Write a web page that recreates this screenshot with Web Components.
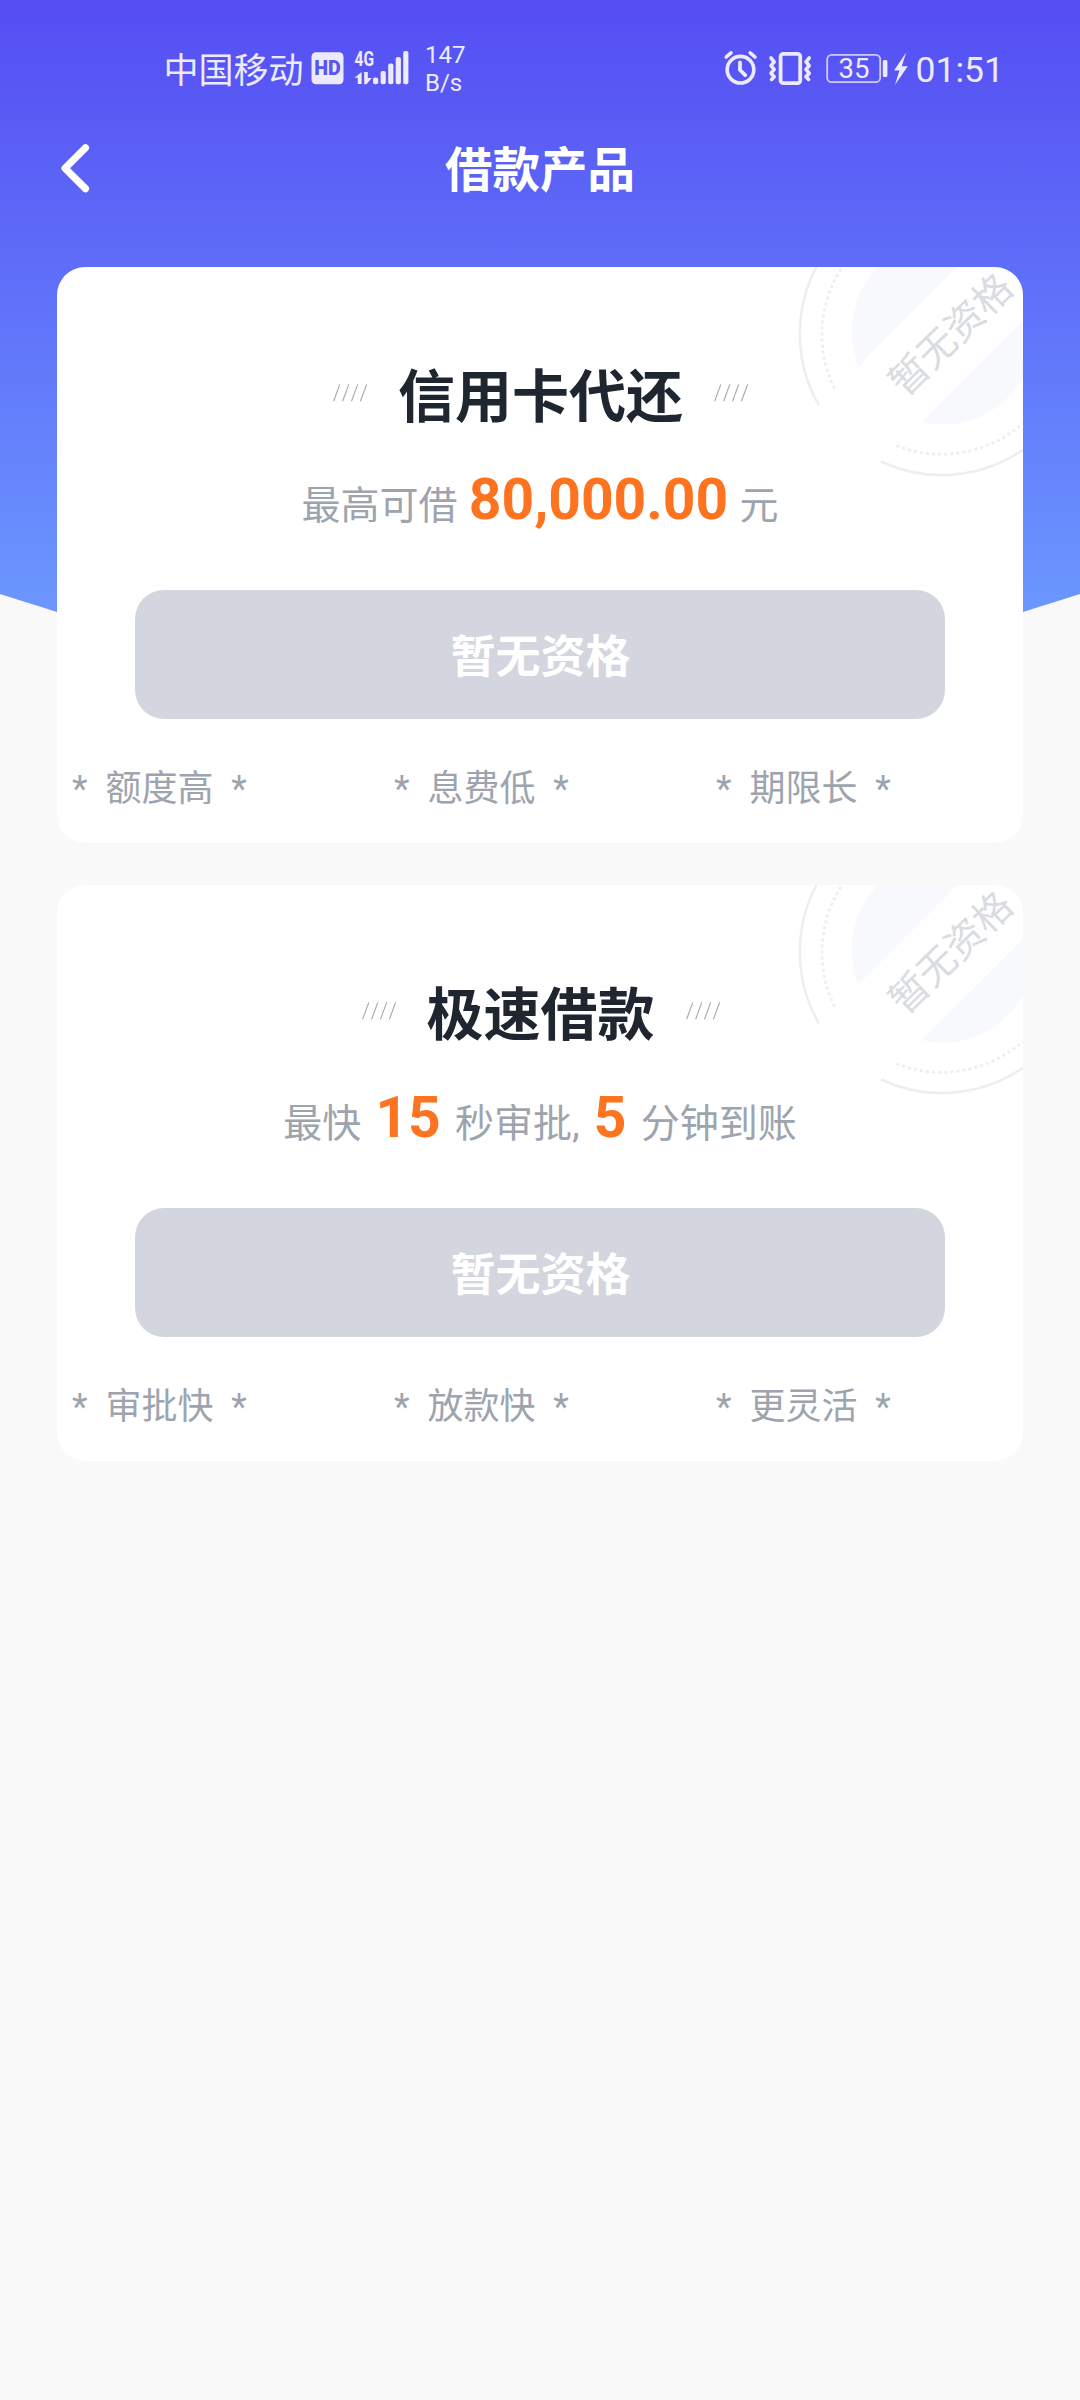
<!DOCTYPE html>
<html lang="zh-CN">
<head>
<meta charset="utf-8">
<title>借款产品</title>
<style>
html,body{margin:0;padding:0;background:#f9f9f9}
body{width:1080px;font-family:Roboto,"Noto Sans CJK SC",sans-serif}
.amount{word-spacing:1.5px}
</style>
</head>
<body>
<loan-page>
  <status-bar slot="top"></status-bar>
  <nav-header slot="top">借款产品</nav-header>
  <loan-card>
    <span slot="title">信用卡代还</span>
    <sub-line slot="sub" class="amount">最高可借 <b>80,000.00</b> 元</sub-line>
    <span slot="action">暂无资格</span>
    <feature-tag slot="features">额度高</feature-tag>
    <feature-tag slot="features">息费低</feature-tag>
    <feature-tag slot="features">期限长</feature-tag>
  </loan-card>
  <loan-card>
    <span slot="title">极速借款</span>
    <sub-line slot="sub">最快<b> 15 </b>秒审批,<b> 5 </b>分钟到账</sub-line>
    <span slot="action">暂无资格</span>
    <feature-tag slot="features">审批快</feature-tag>
    <feature-tag slot="features">放款快</feature-tag>
    <feature-tag slot="features">更灵活</feature-tag>
  </loan-card>
</loan-page>
<script>
const define = (name, html) => customElements.define(name, class extends HTMLElement {
  constructor() {
    super();
    this.attachShadow({ mode: 'open' }).innerHTML = html.replace(/\n/g, '');
  }
});

define('loan-page', `
<style>
:host{display:grid;width:1080px;height:2400px;overflow:hidden;background:#f9f9f9}
.sky,.content{grid-area:1/1}
.sky{height:660px;background:linear-gradient(#554df3 0,#6b98ff 620px);clip-path:polygon(0 0,100% 0,100% 594px,1023px 612px,870px 660px,210px 660px,57px 612px,0 594px)}
.content{display:flex;flex-direction:column;position:relative}
.cards{display:flex;flex-direction:column;gap:42px;padding:57px 57px 0}
</style>
<div class="sky"></div>
<div class="content"><slot name="top"></slot><div class="cards"><slot></slot></div></div>`);

define('status-bar', `
<style>
:host{display:flex;height:50px;padding:45px 0 31px 163.5px;color:#edeaff;align-items:flex-start}
svg{display:block;height:50px;flex:none}
svg text{font-family:Roboto,sans-serif}
.carrier{font-size:35px;line-height:50px;width:144.5px;white-space:nowrap;padding-top:2px}
.speed{font-size:24px;line-height:28px;margin:-4px 0 0 13px;width:50px}
.speed span{display:block}
.clock{margin-left:auto}
.time{font-size:35.5px;line-height:50px;margin:0 74.5px 0 4.5px;width:90px;white-space:nowrap}
</style>
<span class="carrier">中国移动</span>
<svg width="41" viewBox="308 45 41 50"><rect x="311.5" y="52.3" width="32" height="32" rx="4.5" fill="#edeaff"/><text x="327.5" y="75.4" font-size="20.5" font-weight="900" text-anchor="middle" textLength="26.5" lengthAdjust="spacingAndGlyphs" fill="#5a55f0">HD</text></svg>
<svg width="63" viewBox="349 45 63 50" fill="#edeaff">
<text x="354.5" y="66.3" font-size="21" font-weight="700" textLength="19.5" lengthAdjust="spacingAndGlyphs">4G</text>
<path d="M361.6 72v12h-3.8v-6.3h-3.3zM364.2 72h3.6v6h4l-5.4 6.2h-2.2z"/>
<rect x="373" y="77.5" width="5.2" height="6.7" rx="2"/><rect x="380.6" y="71" width="5.2" height="13.2" rx="2"/><rect x="388.2" y="63.5" width="5.2" height="20.7" rx="2"/><rect x="395.7" y="57" width="5.2" height="27.2" rx="2"/><rect x="403.2" y="51" width="5.2" height="33.2" rx="2"/>
</svg>
<div class="speed"><span>147</span><span>B/s</span></div>
<svg class="clock" width="42" viewBox="720 45 42 50" fill="none" stroke="#edeaff" stroke-linecap="round" stroke-linejoin="round">
<circle cx="740.5" cy="69.7" r="13.3" stroke-width="3.6"/><path d="M740 62.5v7.5l5.2 5.2" stroke-width="3.8"/><path d="M726.2 57l4.8-4.2M755 57l-4.8-4.2" stroke-width="3.6"/></svg>
<svg width="56" viewBox="762 45 56 50" fill="none" stroke="#edeaff" stroke-linecap="round" stroke-linejoin="round">
<rect x="780.6" y="53.8" width="19.6" height="29.4" rx="2.8" stroke-width="3.8"/><path d="M771 58l3.2 3.8-3.2 3.8 3.2 3.8-3.2 3.8 3.2 3.6-2.6 2.6M809.2 58l-3.2 3.8 3.2 3.8-3.2 3.8 3.2 3.8-3.2 3.6 2.6 2.6" stroke-width="3.6"/></svg>
<svg width="93" viewBox="818 45 93 50" fill="#edeaff">
<rect x="827.2" y="54.8" width="53" height="27.4" rx="4.5" fill="none" stroke="#cfcbff" stroke-width="1.8"/><rect x="882.8" y="60" width="4.6" height="17" rx="1.5"/>
<text x="854" y="78.4" font-size="27.5" text-anchor="middle">35</text>
<path d="M906.2 52.5l-12.2 18h5.4l-4.4 14.3 12.8-18.6h-6z"/></svg>
<span class="time">01:51</span>`);

define('nav-header', `
<style>
:host{display:grid;grid-template-columns:180px 1fr 180px;height:84px;color:#fff}
svg{display:block;margin-left:57px}
.t{font-size:47.5px;font-weight:700;line-height:77px;text-align:center;padding:7px 0 0 0}
</style>
<svg width="36" height="84" viewBox="57 126 36 84"><path d="M85.5 147.8L65 168.3l20.5 20.3" fill="none" stroke="#fff" stroke-width="7.2" stroke-linecap="round" stroke-linejoin="round"/></svg>
<div class="t"><slot></slot></div>`);

define('slash-marks', `
<style>:host{display:block;margin-bottom:9px}svg{display:block}</style>
<svg width="34" height="18" viewBox="0 0 34 18" stroke="#a3a8af" stroke-width="1.1"><path d="M.6 17.3L6.8.4M9.6 17.3L15.8.4M18.5 17.3L24.7.4M27.4 17.3L33.6.4"/></svg>`);

define('stamp-seal', `
<style>:host{display:block;position:absolute;top:0;right:0}svg{display:block}</style>
<svg width="236" height="216" viewBox="730 0 236 216">
<g fill="#f7f9fd"><path d="M900.5 0L801.3 99.5A92.5 92.5 0 0 1 821 0Z"/><path d="M966 54L865 155.2A92.5 92.5 0 0 0 966 111Z"/></g>
<g fill="none" stroke="#eceef1">
<path d="M759.5 0A143 143 0 0 0 762 138.5M824 194.5A143 143 0 0 0 966 182.8" stroke-width="2.5"/>
<path d="M784 2A122 122 0 0 0 777.5 121.5M839.5 178.6A122 122 0 0 0 966 156.2" stroke-width="2.8" stroke-dasharray="3 3.1"/></g>
<text transform="translate(893.6 67.2) rotate(-44.3)" y="14" font-size="38.5" text-anchor="middle" fill="#d9dce0" font-family='Roboto,"Noto Sans CJK SC",sans-serif'>暂无资格</text>
</svg>`);

define('sub-line', `
<style>
:host{display:block;font-size:39px;line-height:60px;color:#9da4ae;text-align:center;white-space:pre}
::slotted(b){font-size:57px;line-height:0;color:#fd7320;font-weight:700}
</style><slot></slot>`);

define('feature-tag', `
<style>:host{display:block;font-size:36px;line-height:54px;color:#9da4ae;white-space:pre;padding-left:15px}</style><span>*  </span><slot></slot><span>  *</span>`);

define('loan-card', `
<style>
:host{display:flex;flex-direction:column;position:relative;height:576px;background:#fff;border-radius:28px;overflow:hidden}
.title{display:flex;justify-content:center;align-items:center;gap:31px;margin-top:91px;height:80px;font-size:57px;line-height:80px;font-weight:700;color:#20262f;padding-left:1px}
slash-marks{margin-bottom:11px}
.sub{margin-top:38px;height:60px}
.btn{box-sizing:border-box;margin:54px 78px 0;height:129px;padding:7px 0 0 1px;border-radius:29px;background:#d3d6de;color:#fff;font-size:45px;font-weight:700;line-height:122px;text-align:center}
.features{display:grid;grid-template-columns:repeat(3,1fr);margin-top:43px}
</style>
<stamp-seal></stamp-seal>
<div class="title"><slash-marks></slash-marks><slot name="title"></slot><slash-marks></slash-marks></div>
<div class="sub"><slot name="sub"></slot></div>
<div class="btn"><slot name="action"></slot></div>
<div class="features"><slot name="features"></slot></div>`);
</script>
</body>
</html>
